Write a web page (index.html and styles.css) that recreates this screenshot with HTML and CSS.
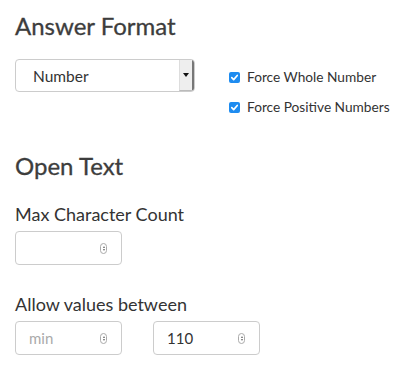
FILE: index.html
```html
<!DOCTYPE html>
<html lang="en">
  <head>
    <meta charset="UTF-8" />
    <title>Answer Format</title>
    <link rel="stylesheet" href="styles.css">
  </head>
  <body>
    <section class="group">
      <h2>Answer Format</h2>
      <div class="format-row">
        <div class="select">
          <span class="select-value">Number</span>
          <span class="select-btn"><span class="caret"></span></span>
        </div>
        <div class="checks">
          <label class="check"><span class="box"><svg viewBox="0 0 12 12" width="11" height="11"><path d="M3 6.2 L5.1 8.3 L9 3.8" fill="none" stroke="#fff" stroke-width="1.8" stroke-linecap="round" stroke-linejoin="round"/></svg></span>Force Whole Number</label>
          <label class="check"><span class="box"><svg viewBox="0 0 12 12" width="11" height="11"><path d="M3 6.2 L5.1 8.3 L9 3.8" fill="none" stroke="#fff" stroke-width="1.8" stroke-linecap="round" stroke-linejoin="round"/></svg></span>Force Positive Numbers</label>
        </div>
      </div>
    </section>

    <section class="group">
      <h2>Open Text</h2>
      <div class="field">
        <div class="label">Max Character Count</div>
        <div class="inputs">
          <div class="num"><span class="num-value"></span><span class="spin"></span></div>
        </div>
      </div>
      <div class="field">
        <div class="label">Allow values between</div>
        <div class="inputs">
          <div class="num"><span class="num-value placeholder">min</span><span class="spin"></span></div>
          <div class="num"><span class="num-value">110</span><span class="spin"></span></div>
        </div>
      </div>
    </section>
  </body>
</html>
```

FILE: styles.css
```css
* {
  margin: 0;
  padding: 0;
  box-sizing: border-box;
}

body {
  font-family: Lato, "Open Sans", sans-serif;
  color: #444;
  background: #fff;
  padding: 12px 15px;
}

h2 {
  font-size: 24px;
  font-weight: 400;
  line-height: 28px;
  color: #3d3d3d;
  -webkit-text-stroke: 0.3px #3d3d3d;
}

.group + .group {
  margin-top: 36px;
}

.format-row {
  display: flex;
  align-items: flex-start;
  margin-top: 19px;
}

.select {
  width: 180px;
  height: 33px;
  border: 1px solid #ccc;
  border-radius: 4px;
  display: flex;
  align-items: center;
  overflow: hidden;
}

.select-value {
  flex: 1;
  font-size: 15.5px;
  color: #333;
  padding-left: 17px;
}

.select-btn {
  width: 15px;
  height: 100%;
  background: #eee;
  border-right: 2px solid #777;
  border-left: 1px solid #ddd;
  border-bottom: 1px solid #bbb;
  display: flex;
  align-items: center;
  justify-content: center;
}

.caret {
  width: 0;
  height: 0;
  border-left: 3px solid transparent;
  border-right: 3px solid transparent;
  border-top: 4px solid #111;
}

.checks {
  margin-left: 34px;
  padding-top: 9px;
  display: flex;
  flex-direction: column;
  gap: 12px;
}

.check {
  display: flex;
  align-items: center;
  font-size: 13.7px;
  color: #333;
  line-height: 18px;
}

.box {
  width: 11px;
  height: 11px;
  border-radius: 2px;
  background: #1e8cf0;
  margin-right: 7px;
  display: flex;
}

.field {
  margin-top: 23px;
}

.label {
  font-size: 18px;
  line-height: 22px;
  color: #333;
}

.inputs {
  display: flex;
  gap: 31px;
  margin-top: 6px;
}

.field + .field {
  margin-top: 28px;
}

.num {
  width: 107px;
  height: 34px;
  border: 1px solid #ccc;
  border-radius: 4px;
  display: flex;
  align-items: center;
  padding: 0 14px 0 13px;
}

.num-value {
  flex: 1;
  font-size: 15px;
  color: #333;
}

.num-value.placeholder {
  color: #aaa;
}

.spin {
  width: 7px;
  height: 11px;
  border: 1px solid #aaa;
  border-radius: 4px;
  position: relative;
}

.spin::before,
.spin::after {
  content: "";
  position: absolute;
  left: 1.5px;
  border-left: 1.5px solid transparent;
  border-right: 1.5px solid transparent;
}

.spin::before {
  top: 2px;
  border-bottom: 2px solid #666;
}

.spin::after {
  bottom: 2px;
  border-top: 2px solid #666;
}
```
